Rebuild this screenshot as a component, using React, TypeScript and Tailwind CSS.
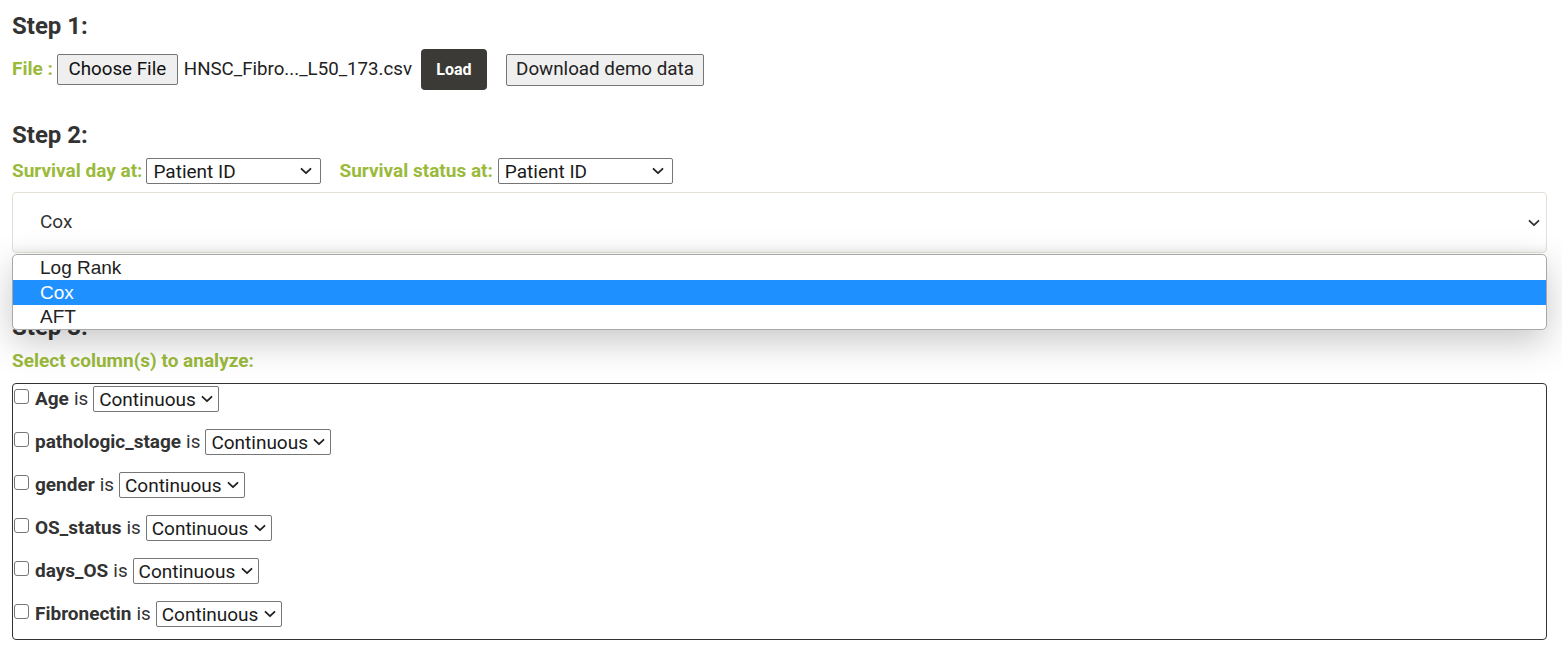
import React from "react";

const GREEN = "text-[#9aba3b]";

function Chevron({ className = "" }: { className?: string }) {
  return (
    <svg viewBox="0 0 12 8" className={className} fill="none" stroke="currentColor" strokeWidth="1.8" strokeLinecap="round" strokeLinejoin="round">
      <path d="M1.5 1.8 6 6.2l4.5-4.4" />
    </svg>
  );
}

function FakeSelect({ value, width, className = "" }: { value: string; width: string; className?: string }) {
  return (
    <div
      className={`inline-flex h-[26px] items-center justify-between border border-[#767676] rounded-[2px] bg-white text-[19px] text-[#1a1a1a] ${width} ${className}`}
    >
      <span className="leading-none">{value}</span>
      <Chevron className="w-[12px] h-[8px] text-[#222]" />
    </div>
  );
}

const columns = ["Age", "pathologic_stage", "gender", "OS_status", "days_OS", "Fibronectin"];

export default function App() {
  return (
    <div className="min-h-[654px] bg-white pl-[12px] pr-[15px] pt-[12px] text-[#333] font-['Roboto',sans-serif]">
      <h2 className="text-[24px] font-bold leading-[28px] text-[#333]">Step 1:</h2>
      <div className="mt-[9px] flex items-center h-[41px]">
        <span className={`text-[19px] font-bold ${GREEN}`}>File :</span>
        <button className="ml-[4px] h-[31px] w-[121px] border border-[#767676] rounded-[2px] bg-[#efefef] text-[18.8px] text-[#111] leading-none">
          Choose File
        </button>
        <span className="ml-[6px] text-[18.7px] text-[#222]">HNSC_Fibro..._L50_173.csv</span>
        <button className="ml-[9px] h-[41px] w-[66px] rounded-[4px] bg-[#3b3a36] text-white text-[16px] font-bold">
          Load
        </button>
        <button className="ml-[19px] h-[32px] w-[198px] border border-[#767676] rounded-[2px] bg-[#efefef] text-[18.8px] text-[#222] leading-none">
          Download demo data
        </button>
      </div>

      <h2 className="mt-[31px] text-[24px] font-bold leading-[28px] text-[#333]">Step 2:</h2>
      <div className="mt-[9px] flex items-center h-[26px]">
        <span className={`text-[19px] font-bold ${GREEN}`}>Survival day at:</span>
        <FakeSelect value="Patient ID" width="w-[175px]" className="ml-[4px] pl-[6px] pr-[8px]" />
        <span className={`ml-[18px] text-[19px] font-bold ${GREEN}`}>Survival status at:</span>
        <FakeSelect value="Patient ID" width="w-[175px]" className="ml-[5px] pl-[6px] pr-[8px]" />
      </div>

      <div className="relative mt-[8px]">
        <div className="flex h-[61px] items-center justify-between rounded-[4px] border border-[#e4dfd6] bg-white pl-[27px] pr-[6px] shadow-[inset_0_-8px_10px_-8px_rgba(0,0,0,0.10)]">
          <span className="text-[19px] text-[#333]">Cox</span>
          <Chevron className="w-[12px] h-[8px] text-[#333]" />
        </div>

        <div className="absolute left-0 right-0 top-[62px] z-10 overflow-hidden rounded-[5px] border border-[#a8a8a8] bg-white shadow-[0_12px_36px_rgba(0,0,0,0.22)] font-['Liberation_Sans',Arial,sans-serif] text-[19px]">
          <div className="h-[25px] pl-[27px] leading-[25px] text-[#222]">Log Rank</div>
          <div className="h-[25px] pl-[27px] leading-[25px] bg-[#1e90ff] text-white">Cox</div>
          <div className="h-[24px] pl-[27px] leading-[24px] text-[#222]">AFT</div>
        </div>

        <h2 className="mt-[60px] text-[24px] font-bold leading-[28px] text-[#333]">Step 3:</h2>
        <div className={`mt-[9px] text-[19px] leading-[22px] font-bold ${GREEN}`}>Select column(s) to analyze:</div>
        <div className="mt-[11px] h-[257px] rounded-[4px] border border-[#333] pt-[2px]">
          <div className="flex flex-col gap-[17px]">
            {columns.map((c) => (
              <div key={c} className="flex items-center h-[26px]">
                <span className="self-start mt-[3px] ml-[1px] w-[15px] h-[15px] rounded-[3px] border border-[#767676] bg-white" />
                <span className="ml-[6px] text-[19px] font-bold text-[#333]">{c}</span>
                <span className="ml-[5px] text-[18.8px] text-[#333]">is</span>
                <FakeSelect value="Continuous" width="w-[126px]" className="ml-[5px] pl-[5px] pr-[5px]" />
              </div>
            ))}
          </div>
        </div>
      </div>
    </div>
  );
}
